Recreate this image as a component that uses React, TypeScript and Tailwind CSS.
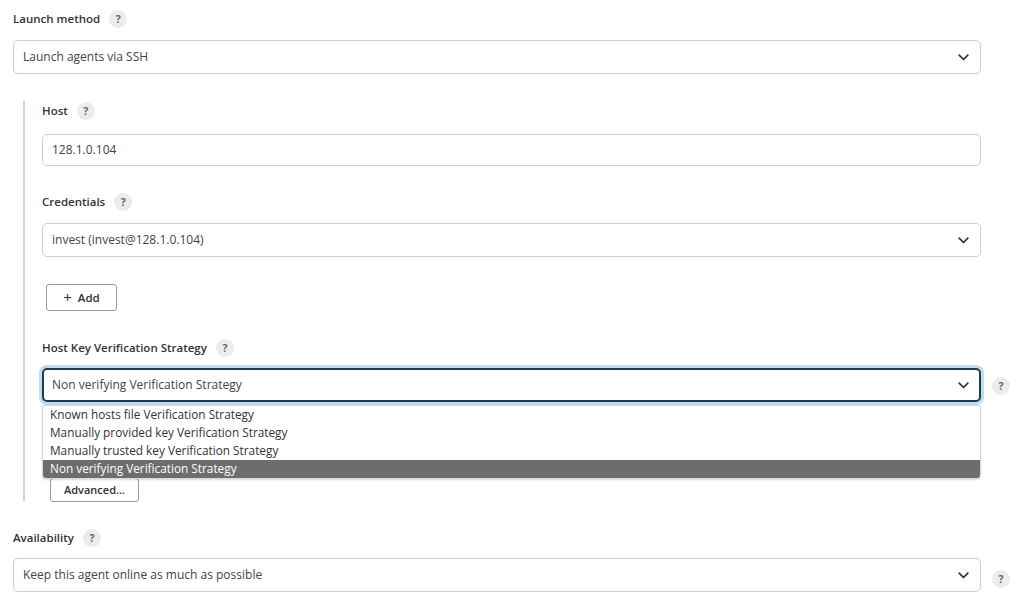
import React from 'react';

const HelpIcon: React.FC = () => (
  <span className="inline-flex h-[18px] w-[18px] items-center justify-center rounded-full bg-[#ececec] text-[10.5px] font-bold leading-none text-[#666]">
    ?
  </span>
);

const Chevron: React.FC = () => (
  <svg width="11" height="7" viewBox="0 0 11 7" fill="none" className="text-[#333]">
    <path d="M1.2 1.2 L5.5 5.5 L9.8 1.2" stroke="currentColor" strokeWidth="1.7" strokeLinecap="round" strokeLinejoin="round" />
  </svg>
);

const Label: React.FC<{ text: string }> = ({ text }) => (
  <div className="flex h-5 items-center gap-[9px] text-[11.5px] font-semibold text-[#333]">
    <span>{text}</span>
    <HelpIcon />
  </div>
);

const SelectBox: React.FC<{ value: string; focused?: boolean }> = ({ value, focused }) => (
  <div
    className={
      focused
        ? 'flex h-[34px] items-center justify-between rounded-[5px] border-2 border-[#1f3b4d] bg-white pl-[8px] pr-[10px] text-[12px] text-[#444] ring-[3px] ring-[#c2dcee]'
        : 'flex h-[34px] items-center justify-between rounded-[5px] border border-[#cfcfcf] bg-white pl-[9px] pr-[11px] text-[12px] text-[#444]'
    }
  >
    <span>{value}</span>
    <Chevron />
  </div>
);

const options = [
  'Known hosts file Verification Strategy',
  'Manually provided key Verification Strategy',
  'Manually trusted key Verification Strategy',
  'Non verifying Verification Strategy',
];

export default function App() {
  return (
    <div className="h-[601px] w-[1024px] overflow-hidden bg-white pl-[13px] pt-[9px] font-['Open_Sans',sans-serif]">
      <div className="w-[968px]">
        <Label text="Launch method" />
        <div className="mt-[11px]">
          <SelectBox value="Launch agents via SSH" />
        </div>
      </div>

      {/* nested launcher config */}
      <div className="ml-[10px] mt-[27px] h-[400px] border-l-2 border-[#d4d4d4] pl-[17px]">
        <div className="w-[939px]">
          <Label text="Host" />
          <div className="mt-[13px] flex h-[32px] items-center rounded-[5px] border border-[#cfcfcf] bg-white pl-[9px] text-[12px] text-[#444]">
            128.1.0.104
          </div>

          <div className="mt-[26px]">
            <Label text="Credentials" />
          </div>
          <div className="mt-[11px]">
            <SelectBox value="invest (invest@128.1.0.104)" />
          </div>

          <button className="ml-[4px] mt-[27px] flex h-[27px] w-[71px] items-center justify-center gap-[6px] rounded-[3px] border border-[#9a9a9a] bg-white text-[11.5px] font-semibold text-[#333]">
            <span className="text-[15px] font-normal leading-none">+</span>
            <span>Add</span>
          </button>

          <div className="mt-[27px]">
            <Label text="Host Key Verification Strategy" />
          </div>
        </div>

        <div className="relative mt-[10px] flex items-start">
          <div className="w-[939px]">
            <SelectBox value="Non verifying Verification Strategy" focused />
          </div>
          <div className="ml-[11px] mt-[4px]">
            <HelpIcon />
          </div>

          <div className="absolute left-0 top-[37px] z-10 w-[939px] overflow-hidden rounded-b-[4px] border border-[#d8d8d8] bg-white text-[11.8px] text-[#333] shadow-[0_1px_2px_rgba(0,0,0,0.15)]">
            {options.map((o, i) => (
              <div
                key={o}
                className={
                  i === options.length - 1
                    ? 'flex h-[18px] items-center bg-[#6d6d6d] pl-[7px] text-white'
                    : 'flex h-[18px] items-center pl-[7px]'
                }
              >
                {o}
              </div>
            ))}
          </div>
        </div>

        <button className="ml-[8px] mt-[76px] flex h-[24px] w-[89px] items-center justify-center rounded-[3px] border border-[#9a9a9a] bg-white text-[11px] font-semibold text-[#333]">
          Advanced...
        </button>
      </div>

      <div className="mt-[27px]">
        <Label text="Availability" />
      </div>
      <div className="mt-[10px] flex items-start">
        <div className="w-[968px]">
          <SelectBox value="Keep this agent online as much as possible" />
        </div>
        <div className="ml-[11px] mt-[7px]">
          <HelpIcon />
        </div>
      </div>
    </div>
  );
}
